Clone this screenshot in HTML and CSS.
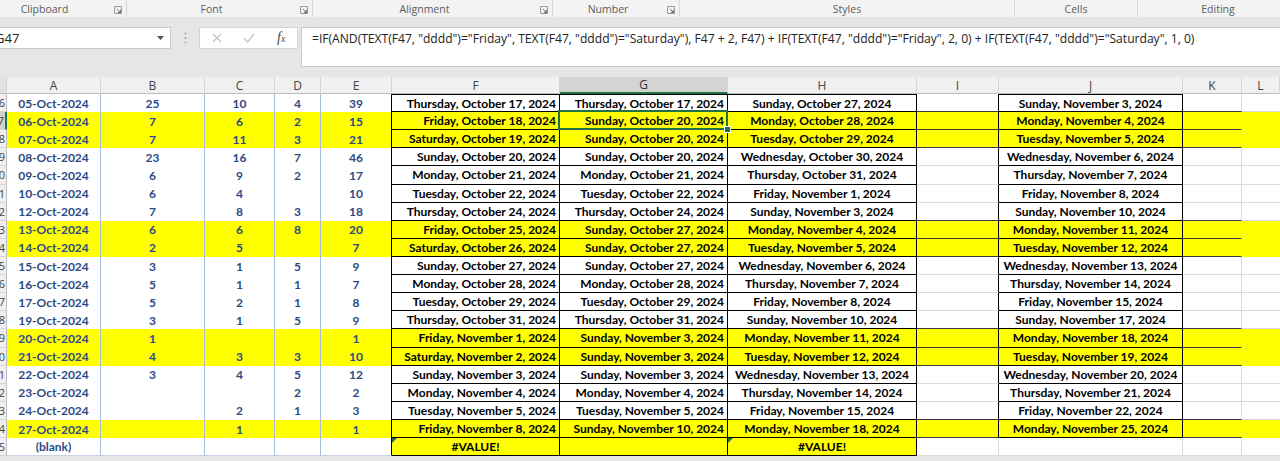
FILE: index.html
```html
<!DOCTYPE html>
<html lang="en">
<head>
  <meta charset="UTF-8">
  <meta name="viewport" content="width=device-width, initial-scale=1.0">
  <title>Book1 - Excel</title>
  <link rel="stylesheet" href="styles.css">
</head>
<body>
  <div class="ribbon">
    <div class="group clipboard">
      <span class="label">Clipboard</span>
      <span class="launcher"><svg width="8" height="8" viewBox="0 0 8 8"><path d="M0.5 7.5V0.5h7v7z" fill="none" stroke="#9a9a9a"/><path d="M3 3l3.2 3.2M6.5 3.8v2.7H3.8" fill="none" stroke="#6f6f6f"/></svg></span>
    </div>
    <div class="group font">
      <span class="label">Font</span>
      <span class="launcher"><svg width="8" height="8" viewBox="0 0 8 8"><path d="M0.5 7.5V0.5h7v7z" fill="none" stroke="#9a9a9a"/><path d="M3 3l3.2 3.2M6.5 3.8v2.7H3.8" fill="none" stroke="#6f6f6f"/></svg></span>
    </div>
    <div class="group alignment">
      <span class="label">Alignment</span>
      <span class="launcher"><svg width="8" height="8" viewBox="0 0 8 8"><path d="M0.5 7.5V0.5h7v7z" fill="none" stroke="#9a9a9a"/><path d="M3 3l3.2 3.2M6.5 3.8v2.7H3.8" fill="none" stroke="#6f6f6f"/></svg></span>
    </div>
    <div class="group number">
      <span class="label">Number</span>
      <span class="launcher"><svg width="8" height="8" viewBox="0 0 8 8"><path d="M0.5 7.5V0.5h7v7z" fill="none" stroke="#9a9a9a"/><path d="M3 3l3.2 3.2M6.5 3.8v2.7H3.8" fill="none" stroke="#6f6f6f"/></svg></span>
    </div>
    <div class="group styles"><span class="label">Styles</span></div>
    <div class="group cells"><span class="label">Cells</span></div>
    <div class="group editing"><span class="label">Editing</span></div>
  </div>

  <div class="formula-row">
    <div class="name-box">
      <span class="ref">G47</span>
      <svg class="drop" width="7" height="4" viewBox="0 0 7 4"><path d="M0 0h7L3.5 4z" fill="#555"/></svg>
    </div>
    <div class="grip">
      <svg width="3" height="12" viewBox="0 0 3 12"><circle cx="1.5" cy="1.5" r="1" fill="#a8a8a8"/><circle cx="1.5" cy="6" r="1" fill="#a8a8a8"/><circle cx="1.5" cy="10.5" r="1" fill="#a8a8a8"/></svg>
    </div>
    <div class="fx-buttons">
      <svg class="cancel" width="10" height="10" viewBox="0 0 10 10"><path d="M1 1l8 8M9 1L1 9" stroke="#c4c4c4" stroke-width="1.3"/></svg>
      <svg class="enter" width="12" height="10" viewBox="0 0 12 10"><path d="M1 5.5l3.5 3.5L11 1" fill="none" stroke="#c4c4c4" stroke-width="1.4"/></svg>
      <span class="fx">f<small>x</small></span>
    </div>
    <div class="formula">=IF(AND(TEXT(F47, "dddd")="Friday", TEXT(F47, "dddd")="Saturday"), F47 + 2, F47) + IF(TEXT(F47, "dddd")="Friday", 2, 0) + IF(TEXT(F47, "dddd")="Saturday", 1, 0)</div>
  </div>

  <div class="sheet" id="sheet"></div>

  <script>
const rows = [
  ['05-Oct-2024', 25, 10, 4, 39, 'Thursday, October 17, 2024', 'Thursday, October 17, 2024', 'Sunday, October 27, 2024', 'Sunday, November 3, 2024'],
  ['06-Oct-2024', 7, 6, 2, 15, 'Friday, October 18, 2024', 'Sunday, October 20, 2024', 'Monday, October 28, 2024', 'Monday, November 4, 2024'],
  ['07-Oct-2024', 7, 11, 3, 21, 'Saturday, October 19, 2024', 'Sunday, October 20, 2024', 'Tuesday, October 29, 2024', 'Tuesday, November 5, 2024'],
  ['08-Oct-2024', 23, 16, 7, 46, 'Sunday, October 20, 2024', 'Sunday, October 20, 2024', 'Wednesday, October 30, 2024', 'Wednesday, November 6, 2024'],
  ['09-Oct-2024', 6, 9, 2, 17, 'Monday, October 21, 2024', 'Monday, October 21, 2024', 'Thursday, October 31, 2024', 'Thursday, November 7, 2024'],
  ['10-Oct-2024', 6, 4, '', 10, 'Tuesday, October 22, 2024', 'Tuesday, October 22, 2024', 'Friday, November 1, 2024', 'Friday, November 8, 2024'],
  ['12-Oct-2024', 7, 8, 3, 18, 'Thursday, October 24, 2024', 'Thursday, October 24, 2024', 'Sunday, November 3, 2024', 'Sunday, November 10, 2024'],
  ['13-Oct-2024', 6, 6, 8, 20, 'Friday, October 25, 2024', 'Sunday, October 27, 2024', 'Monday, November 4, 2024', 'Monday, November 11, 2024'],
  ['14-Oct-2024', 2, 5, '', 7, 'Saturday, October 26, 2024', 'Sunday, October 27, 2024', 'Tuesday, November 5, 2024', 'Tuesday, November 12, 2024'],
  ['15-Oct-2024', 3, 1, 5, 9, 'Sunday, October 27, 2024', 'Sunday, October 27, 2024', 'Wednesday, November 6, 2024', 'Wednesday, November 13, 2024'],
  ['16-Oct-2024', 5, 1, 1, 7, 'Monday, October 28, 2024', 'Monday, October 28, 2024', 'Thursday, November 7, 2024', 'Thursday, November 14, 2024'],
  ['17-Oct-2024', 5, 2, 1, 8, 'Tuesday, October 29, 2024', 'Tuesday, October 29, 2024', 'Friday, November 8, 2024', 'Friday, November 15, 2024'],
  ['19-Oct-2024', 3, 1, 5, 9, 'Thursday, October 31, 2024', 'Thursday, October 31, 2024', 'Sunday, November 10, 2024', 'Sunday, November 17, 2024'],
  ['20-Oct-2024', 1, '', '', 1, 'Friday, November 1, 2024', 'Sunday, November 3, 2024', 'Monday, November 11, 2024', 'Monday, November 18, 2024'],
  ['21-Oct-2024', 4, 3, 3, 10, 'Saturday, November 2, 2024', 'Sunday, November 3, 2024', 'Tuesday, November 12, 2024', 'Tuesday, November 19, 2024'],
  ['22-Oct-2024', 3, 4, 5, 12, 'Sunday, November 3, 2024', 'Sunday, November 3, 2024', 'Wednesday, November 13, 2024', 'Wednesday, November 20, 2024'],
  ['23-Oct-2024', '', '', 2, 2, 'Monday, November 4, 2024', 'Monday, November 4, 2024', 'Thursday, November 14, 2024', 'Thursday, November 21, 2024'],
  ['24-Oct-2024', '', 2, 1, 3, 'Tuesday, November 5, 2024', 'Tuesday, November 5, 2024', 'Friday, November 15, 2024', 'Friday, November 22, 2024'],
  ['27-Oct-2024', '', 1, '', 1, 'Friday, November 8, 2024', 'Sunday, November 10, 2024', 'Monday, November 18, 2024', 'Monday, November 25, 2024'],
  ['(blank)', '', '', '', '', '#VALUE!', '', '#VALUE!', '']
];

// highlighted weekend rows
const yellow = [1, 2, 7, 8, 13, 14, 18];
const lastRow = rows.length - 1;

const sheet = document.getElementById('sheet');

function add(cls, text) {
  const cell = document.createElement('div');
  cell.className = cls;
  cell.textContent = text;
  sheet.appendChild(cell);
  return cell;
}

['', 'A', 'B', 'C', 'D', 'E', 'F', 'G', 'H', 'I', 'J', 'K', 'L'].forEach((col) => {
  let cls = 'hd';
  if (col === '') cls += ' corner';
  if (col === 'G') cls += ' active';
  add(cls, col);
});

rows.forEach((r, i) => {
  const y = yellow.includes(i);
  const edge = y || yellow.includes(i + 1);
  const blank = i === lastRow;
  const fill = y ? ' y' : '';
  const top = i === 0 ? ' top' : '';

  const rn = add('rn' + (i === 1 ? ' active' : ''), '');
  rn.innerHTML = `<span>${46 + i}</span>`;

  for (let c = 0; c < 5; c++) {
    let cls = 'pv' + fill;
    if (c === 4) cls += ' last';
    if (blank) cls += ' end';
    add(cls, r[c]);
  }

  // F, G, H
  [5, 6, 7].forEach((c) => {
    let cls = 'tb' + top;
    cls += (blank || y) ? ' y' : '';
    if (r[c] === '#VALUE!') cls += ' err';
    else cls += c === 7 ? ' c' : ' r';
    if (c === 6 && i === 1) cls += ' sel';
    add(cls, r[c]);
  });

  add('gi' + fill + (edge ? ' dark' : '') + (blank ? '' : ' before-tb'), '');
  add((blank ? 'gj' : 'tb c' + top) + fill, r[8]);
  add('gk' + fill + (edge ? ' dark' : ''), '');
  add('gl' + fill, '');
});
  </script>
</body>
</html>
```

FILE: styles.css
```css
body {
  margin: 0;
  width: 1280px;
  height: 461px;
  overflow: hidden;
  background-color: #e6e6e6;
  font-family: "Open Sans", "Noto Sans", sans-serif;
}

/* ribbon group captions */
.ribbon {
  display: flex;
  height: 17px;
  background-color: #f3f3f3;
  overflow: hidden;
}

.group {
  display: flex;
  align-items: center;
  flex-shrink: 0;
  border-right: 1px solid #d8d8d8;
  box-sizing: border-box;
}

.group .label {
  flex: 1;
  text-align: center;
  font-size: 10.5px;
  color: #5c5c5c;
}

.launcher {
  width: 16px;
  display: flex;
  justify-content: center;
  padding-top: 2px;
}

.clipboard { width: 148px; margin-left: -21px; }
.font { width: 186px; }
.alignment { width: 240px; }
.number { width: 127px; }
.styles { width: 335px; }
.cells { width: 123px; }
.editing { width: 160px; border-right: none; }

/* formula bar */
.formula-row {
  display: flex;
  align-items: flex-start;
  margin-top: 10px;
  height: 40px;
}

.name-box {
  width: 172px;
  height: 22px;
  margin-left: -1px;
  background: white;
  border: 1px solid #c8c8c8;
  box-sizing: border-box;
  display: flex;
  align-items: center;
  justify-content: space-between;
  overflow: hidden;
}

.name-box .ref {
  font-size: 13px;
  color: #222;
  margin-left: -5px;
}

.name-box .drop {
  margin-right: 6px;
}

.grip {
  width: 28px;
  height: 22px;
  display: flex;
  align-items: center;
  justify-content: center;
}

.fx-buttons {
  width: 99px;
  height: 22px;
  background: white;
  border: 1px solid #d4d4d4;
  box-sizing: border-box;
  display: flex;
  align-items: center;
}

.fx-buttons .cancel { margin-left: 12px; }
.fx-buttons .enter { margin-left: 21px; }

.fx {
  margin-left: 22px;
  font-family: "Liberation Serif", serif;
  font-style: italic;
  font-size: 14px;
  color: #444;
}

.fx small {
  font-size: 10px;
}

.formula {
  flex: 1;
  height: 40px;
  margin-left: 3px;
  background: white;
  border: 1px solid #c8c8c8;
  border-right: none;
  box-sizing: border-box;
  padding: 2px 0 0 10px;
  font-size: 12.1px;
  color: #222;
  white-space: nowrap;
}

/* worksheet */
.sheet {
  display: grid;
  grid-template-columns: 7px 94px 104px 70px 46px 71px 168px 168px 189px 82px 184px 59px 38px;
  grid-template-rows: 17px;
  grid-auto-rows: 18.12px;
  margin-top: 10px;
  background: white;
  font-family: Lato, "Open Sans", sans-serif;
  font-weight: bold;
  font-size: 12px;
  color: #000;
}

.sheet > div {
  box-sizing: border-box;
  display: flex;
  align-items: center;
  justify-content: center;
  white-space: nowrap;
  overflow: hidden;
  padding: 0 3px;
}

.hd {
  background-color: #f0f0f0;
  border-right: 1px solid #d6d6d6;
  border-bottom: 1px solid #bdbdbd;
  font-family: "Open Sans", sans-serif;
  font-weight: normal;
  font-size: 12px;
  color: #444;
}

.hd.corner {
  background-color: #e2e2e2;
}

.hd.active {
  background-color: #d4d4d4;
  border-bottom: 2px solid #217346;
  color: #333;
}

.sheet > .rn {
  justify-content: flex-end;
  padding: 0;
  background-color: #efefef;
  border-right: 1px solid #bdbdbd;
  border-bottom: 1px solid #d6d6d6;
  font-family: "Open Sans", sans-serif;
  font-weight: normal;
  font-size: 11px;
  color: #444;
}

.rn span {
  margin-right: 1px;
}

.rn.active {
  background-color: #d2d2d2;
  border-right: 2px solid #217346;
}

.pv {
  color: #2c4a85;
  border-right: 1px solid #a9bbde;
}

.pv.last {
  border-right: 1px solid #000;
}

.pv.end {
  border-bottom: 1px solid #c8d2e6;
}

.y {
  background-color: #ffff00;
}

.tb {
  border-right: 1px solid #000;
  border-bottom: 1px solid #000;
}

.tb.top {
  border-top: 1px solid #000;
}

.sheet > .r {
  justify-content: flex-end;
}

.err {
  position: relative;
}

.err::before {
  content: "";
  position: absolute;
  top: 0;
  left: 0;
  border-top: 5px solid #1e7145;
  border-right: 5px solid transparent;
}

.sel {
  position: relative;
  overflow: visible !important;
  z-index: 2;
}

.sel::after {
  content: "";
  position: absolute;
  top: -2px;
  left: -2px;
  right: -1px;
  bottom: -1px;
  border: 2px solid #217346;
}

.sel::before {
  content: "";
  position: absolute;
  right: -4px;
  bottom: -4px;
  width: 5px;
  height: 5px;
  background: #217346;
  border: 1px solid white;
  z-index: 3;
}

.gi {
  border-bottom: 1px solid #dadada;
  border-right: 1px solid #dadada;
}

.gi.before-tb {
  border-right: 1px solid #000;
}

.gi.dark,
.gk.dark {
  border-bottom: 1px solid #3a3a3a;
}

.gj {
  border-right: 1px solid #dadada;
  border-bottom: 1px solid #dadada;
}

.gk {
  border-bottom: 1px solid #dadada;
  border-right: 1px solid #dadada;
}

.gk.y {
  border-right-color: transparent;
}

.gl {
  border-bottom: 1px solid #dadada;
}

.gl.y {
  border-bottom-color: transparent;
}
```
